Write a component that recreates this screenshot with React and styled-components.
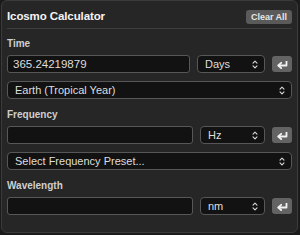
import React from 'react';
import styled, { createGlobalStyle } from 'styled-components';

const GlobalStyle = createGlobalStyle`
  html, body {
    margin: 0;
    padding: 0;
    background: #1b1b1b;
  }
  body {
    font-family: 'Liberation Sans', Arial, sans-serif;
  }
`;

const Chevrons = () => (
  <svg width="6" height="9" viewBox="0 0 6 9" fill="none">
    <path d="M1 3.2 L3 1.2 L5 3.2" stroke="#d8d8d8" strokeWidth="1.1" strokeLinecap="round" strokeLinejoin="round" />
    <path d="M1 5.8 L3 7.8 L5 5.8" stroke="#d8d8d8" strokeWidth="1.1" strokeLinecap="round" strokeLinejoin="round" />
  </svg>
);

const EnterIcon = () => (
  <svg width="11" height="9" viewBox="0 0 11 9" fill="none">
    <path d="M9.5 1 V5.5 H2" stroke="#f2f2f2" strokeWidth="1.8" strokeLinejoin="round" />
    <path d="M4.2 2.8 L1.2 5.5 L4.2 8.2" stroke="#f2f2f2" strokeWidth="1.8" strokeLinejoin="round" strokeLinecap="round" />
  </svg>
);

const Unit = ({ value, width }) => (
  <SelectBox $width={width}>
    <SelectText>{value}</SelectText>
    <Chevrons />
  </SelectBox>
);

const Entry = ({ label, value, unit, unitWidth, preset }) => (
  <Section>
    <Label>{label}</Label>
    <Row>
      <Field>{value}</Field>
      <Unit value={unit} width={unitWidth} />
      <EnterButton>
        <EnterIcon />
      </EnterButton>
    </Row>
    {preset && (
      <SelectBox $wide>
        <SelectText>{preset}</SelectText>
        <Chevrons />
      </SelectBox>
    )}
  </Section>
);

export default function App() {
  return (
    <>
      <GlobalStyle />
      <Panel>
        <Header>
          <Title>Icosmo Calculator</Title>
          <ClearButton>Clear All</ClearButton>
        </Header>
        <Entry label="Time" value="365.24219879" unit="Days" unitWidth={68} preset="Earth (Tropical Year)" />
        <Entry label="Frequency" value="" unit="Hz" unitWidth={65} preset="Select Frequency Preset..." />
        <Entry label="Wavelength" value="" unit="nm" unitWidth={65} />
      </Panel>
    </>
  );
}

const Panel = styled.div`
  box-sizing: border-box;
  width: 297px;
  height: 233px;
  margin-left: 1px;
  padding: 0 5px;
  background: #262626;
  border: 1px solid #3b3b3b;
  border-radius: 6px;
  display: flex;
  flex-direction: column;
`;

const Header = styled.div`
  display: flex;
  align-items: center;
  justify-content: space-between;
  height: 27px;
  border-bottom: 1px solid #3d3d3d;
`;

const Title = styled.div`
  color: #f4f4f4;
  font-weight: bold;
  font-size: 11.5px;
  letter-spacing: -0.1px;
  margin-top: 3px;
`;

const ClearButton = styled.button`
  box-sizing: border-box;
  height: 14px;
  width: 46px;
  margin-top: 4px;
  padding: 0;
  border: none;
  border-radius: 3px;
  background: #5a5a5a;
  color: #e6e6e6;
  font-family: 'Liberation Sans', Arial, sans-serif;
  font-size: 9px;
  font-weight: bold;
`;

const Section = styled.div`
  display: flex;
  flex-direction: column;
  gap: 8px;
  margin-top: 9px;

  & + & {
    margin-top: 10px;
  }
`;

const Label = styled.div`
  color: #cfcfcf;
  font-size: 10px;
  font-weight: bold;
  line-height: 12px;
  margin-bottom: -3px;
`;

const Row = styled.div`
  display: flex;
  align-items: center;
  gap: 7px;
  height: 18px;
`;

const Field = styled.div`
  box-sizing: border-box;
  flex: 1;
  height: 18px;
  padding: 0 5px;
  background: #121212;
  border: 1px solid #575757;
  border-radius: 3px;
  color: #dedede;
  font-size: 11.5px;
  line-height: 16px;
`;

const SelectBox = styled.div`
  box-sizing: border-box;
  width: ${(p) => (p.$wide ? '100%' : `${p.$width}px`)};
  height: 18px;
  padding: 0 6px 0 7px;
  display: flex;
  align-items: center;
  justify-content: space-between;
  background: #121212;
  border: 1px solid #575757;
  border-radius: 4px;
`;

const SelectText = styled.span`
  color: #dedede;
  font-size: 11px;
  line-height: 16px;
  white-space: nowrap;
`;

const EnterButton = styled.div`
  width: 20px;
  height: 16px;
  display: flex;
  align-items: center;
  justify-content: center;
  background: #636363;
  border-radius: 3px;
`;
